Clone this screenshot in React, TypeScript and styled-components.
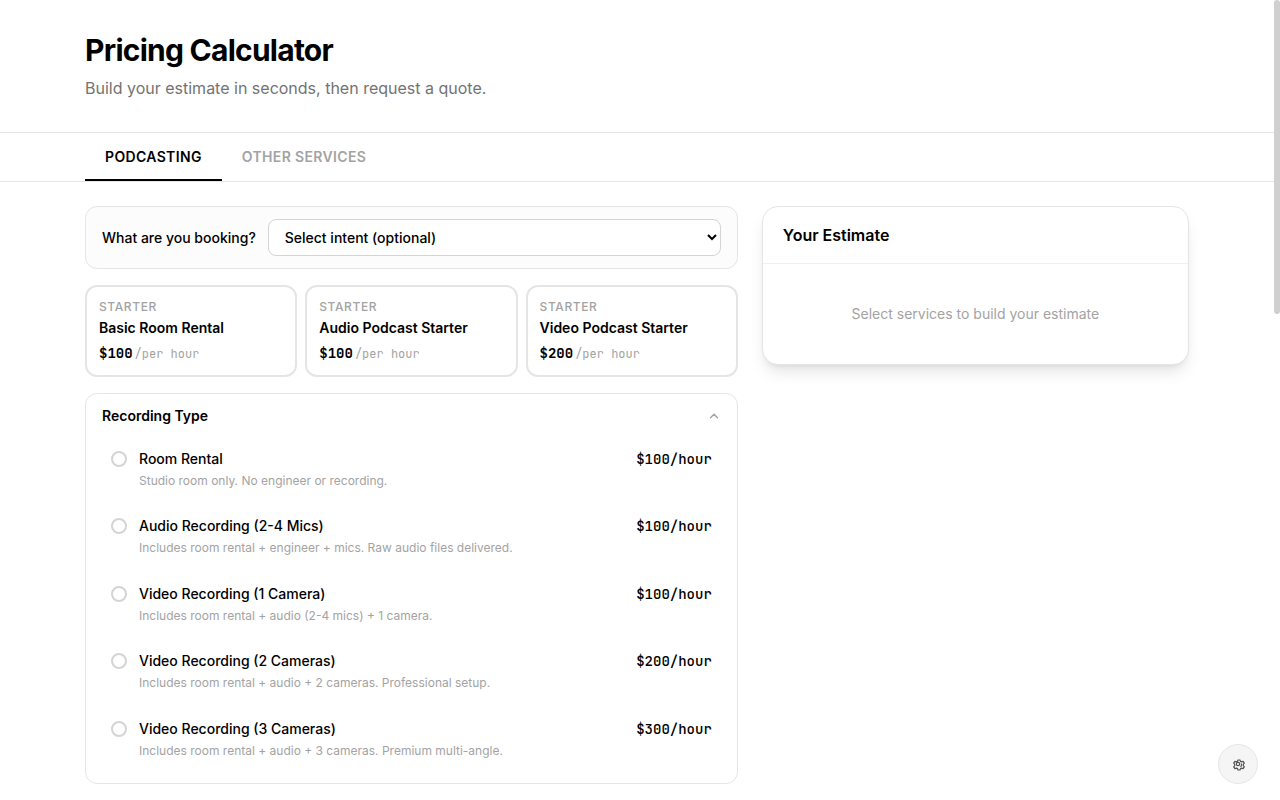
import React, { useEffect, useRef, useState } from "react";
import styled, { createGlobalStyle } from "styled-components";

const sans = `Inter, "Liberation Sans", sans-serif`;
const mono = `"JetBrains Mono", "DejaVu Sans Mono", "Liberation Mono", monospace`;

const GlobalStyle = createGlobalStyle`
  *, *::before, *::after { box-sizing: border-box; }
  body { margin: 0; background: #fff; color: #000; font-family: ${sans}; font-size: 16px; line-height: 24px; -webkit-font-smoothing: antialiased; }
  h1, h2, h3, p { margin: 0; }
  button, input, select { font-family: inherit; margin: 0; }
`;

const Shell = styled.div`
  display: flex;
  height: 100vh;
`;

const Page = styled.div`
  flex: 1;
  min-width: 0;
  overflow-y: auto;
  scrollbar-width: none;
`;

const ScrollTrack = styled.div`
  flex: none;
  width: 6px;
`;

const ScrollThumb = styled.div`
  border-radius: 3px;
  background: #d0d0d0;
`;

const Content = styled.div`
  min-height: 255vh;
`;

const Container = styled.div`
  max-width: 1152px;
  margin: 0 auto;
  padding: 0 24px;
`;

const Header = styled.header`
  padding: 32px 0;
  border-bottom: 1px solid #e5e5e5;
`;

const Title = styled.h1`
  font-size: 30px;
  line-height: 36px;
  font-weight: 700;
  letter-spacing: -0.025em;
`;

const Subtitle = styled.p`
  margin-top: 8px;
  color: #737373;
`;

const TabBar = styled.nav`
  border-bottom: 1px solid #e5e5e5;
`;

const TabList = styled.div`
  display: flex;
`;

const Tab = styled.button<{ $active: boolean }>`
  padding: 14px 20px 12px;
  border: 0;
  border-bottom: 2px solid ${(p) => (p.$active ? "#000" : "transparent")};
  background: none;
  color: ${(p) => (p.$active ? "#000" : "#a3a3a3")};
  font-size: 14px;
  line-height: 20px;
  font-weight: 600;
  letter-spacing: 0.025em;
  text-transform: uppercase;
  cursor: pointer;
`;

const Columns = styled.main`
  display: grid;
  grid-template-columns: repeat(5, minmax(0, 1fr));
  gap: 24px;
  align-items: start;
  padding: 24px 0;
`;

const Services = styled.div`
  grid-column: span 3;
  display: flex;
  flex-direction: column;
  gap: 16px;
`;

const IntentBar = styled.div`
  display: flex;
  align-items: center;
  gap: 12px;
  padding: 12px 16px;
  border: 1px solid #e5e5e5;
  border-radius: 12px;
  background: #fcfcfc;
`;

const IntentLabel = styled.label`
  font-size: 14px;
  line-height: 20px;
  font-weight: 500;
  white-space: nowrap;
`;

const IntentSelect = styled.select`
  flex: 1;
  min-width: 0;
  height: 37px;
  padding: 0 0 0 12px;
  border: 1px solid #d4d4d4;
  border-radius: 8px;
  background: #fff;
  color: #000;
  font-size: 14px;
  font-weight: 500;
`;

const Starters = styled.div`
  display: grid;
  grid-template-columns: repeat(3, minmax(0, 1fr));
  gap: 8px;
`;

const StarterCard = styled.button`
  display: flex;
  flex-direction: column;
  align-items: flex-start;
  padding: 12px;
  border: 2px solid #e5e5e5;
  border-radius: 12px;
  background: #fff;
  color: #000;
  text-align: left;
  cursor: pointer;
`;

const StarterTag = styled.span`
  color: #a3a3a3;
  font-size: 12px;
  line-height: 16px;
  font-weight: 500;
  letter-spacing: 0.05em;
  text-transform: uppercase;
`;

const StarterName = styled.span`
  font-size: 14px;
  line-height: 26px;
  font-weight: 600;
`;

const StarterPrice = styled.span`
  display: flex;
  align-items: baseline;
  gap: 2px;
  margin-top: 2px;
  font-family: ${mono};
  font-size: 14px;
  line-height: 20px;
  font-weight: 700;
`;

const StarterUnit = styled.span`
  color: #a3a3a3;
  font-size: 12px;
  line-height: 16px;
  font-weight: 400;
`;

const Section = styled.section`
  border: 1px solid #e5e5e5;
  border-radius: 12px;
  background: #fff;
`;

const SectionToggle = styled.button`
  display: flex;
  align-items: center;
  justify-content: space-between;
  width: 100%;
  padding: 12px 16px;
  border: 0;
  background: none;
  color: #000;
  font-size: 14px;
  line-height: 20px;
  font-weight: 600;
  cursor: pointer;
`;

const Chevron = styled.svg`
  width: 14px;
  height: 14px;
  color: #a3a3a3;
`;

const OptionList = styled.div`
  display: grid;
  grid-auto-rows: 1fr;
  gap: 4px;
  min-height: 345px;
  padding: 0 8px 12px;
`;

const Option = styled.label`
  display: flex;
  align-items: flex-start;
  gap: 12px;
  padding: 10px 16px;
  border: 1px solid transparent;
  border-radius: 8px;
  cursor: pointer;
`;

const Radio = styled.input`
  appearance: none;
  flex: none;
  width: 16px;
  height: 16px;
  margin-top: 2px;
  border: 2px solid #d4d4d4;
  border-radius: 50%;
  &:checked { border: 5px solid #000; }
`;

const OptionText = styled.span`
  flex: 1;
  display: flex;
  flex-direction: column;
  gap: 4px;
`;

const OptionName = styled.span`
  font-size: 14px;
  line-height: 20px;
  font-weight: 500;
`;

const OptionNote = styled.span`
  color: #a3a3a3;
  font-size: 12px;
  line-height: 16px;
`;

const OptionPrice = styled.span`
  font-family: ${mono};
  font-size: 14px;
  line-height: 20px;
  font-weight: 500;
`;

const Estimate = styled.aside`
  grid-column: span 2;
  border: 1px solid #e5e5e5;
  border-radius: 16px;
  background: #fff;
  box-shadow: 0 10px 15px -3px rgba(0, 0, 0, 0.1), 0 4px 6px -4px rgba(0, 0, 0, 0.1);
`;

const EstimateTitle = styled.h2`
  padding: 16px 20px;
  border-bottom: 1px solid #f0f0f0;
  font-size: 16px;
  line-height: 24px;
  font-weight: 600;
`;

const EstimateEmpty = styled.p`
  padding: 40px 20px;
  color: #a3a3a3;
  font-size: 14px;
  line-height: 20px;
  text-align: center;
`;

const SettingsButton = styled.button`
  position: fixed;
  right: 22px;
  bottom: 16px;
  display: flex;
  align-items: center;
  justify-content: center;
  width: 40px;
  height: 40px;
  padding: 2px 0 0 2px;
  border: 1px solid #e5e5e5;
  border-radius: 50%;
  background: #f5f5f5;
  color: #525252;
  cursor: pointer;
`;

const starters = [
  { name: "Basic Room Rental", price: "$100" },
  { name: "Audio Podcast Starter", price: "$100" },
  { name: "Video Podcast Starter", price: "$200" },
];

const recordingTypes = [
  { name: "Room Rental", note: "Studio room only. No engineer or recording.", price: "$100/hour" },
  { name: "Audio Recording (2-4 Mics)", note: "Includes room rental + engineer + mics. Raw audio files delivered.", price: "$100/hour" },
  { name: "Video Recording (1 Camera)", note: "Includes room rental + audio (2-4 mics) + 1 camera.", price: "$100/hour" },
  { name: "Video Recording (2 Cameras)", note: "Includes room rental + audio + 2 cameras. Professional setup.", price: "$200/hour" },
  { name: "Video Recording (3 Cameras)", note: "Includes room rental + audio + 3 cameras. Premium multi-angle.", price: "$300/hour" },
];

const tabs = ["Podcasting", "Other Services"];

export default function App() {
  const [tab, setTab] = useState(tabs[0]);
  const [open, setOpen] = useState(true);
  const [thumb, setThumb] = useState({ size: 39, offset: 0 });
  const page = useRef<HTMLDivElement>(null);

  const updateThumb = () => {
    const el = page.current;
    if (!el) return;
    setThumb({
      size: (el.clientHeight / el.scrollHeight) * 100,
      offset: (el.scrollTop / el.scrollHeight) * el.clientHeight,
    });
  };

  useEffect(() => {
    updateThumb();
    window.addEventListener("resize", updateThumb);
    return () => window.removeEventListener("resize", updateThumb);
  }, []);

  return (
    <>
      <GlobalStyle />
      <Shell>
        <Page ref={page} onScroll={updateThumb}>
          <Content>
            <Header>
              <Container>
                <Title>Pricing Calculator</Title>
                <Subtitle>Build your estimate in seconds, then request a quote.</Subtitle>
              </Container>
            </Header>
            <TabBar>
              <Container>
                <TabList>
                  {tabs.map((name) => (
                    <Tab key={name} type="button" $active={name === tab} onClick={() => setTab(name)}>
                      {name}
                    </Tab>
                  ))}
                </TabList>
              </Container>
            </TabBar>
            <Container>
              <Columns>
                <Services>
                  <IntentBar>
                    <IntentLabel htmlFor="intent">What are you booking?</IntentLabel>
                    <IntentSelect id="intent">
                      <option>Select intent (optional)</option>
                    </IntentSelect>
                  </IntentBar>
                  <Starters>
                    {starters.map((s) => (
                      <StarterCard key={s.name} type="button">
                        <StarterTag>Starter</StarterTag>
                        <StarterName>{s.name}</StarterName>
                        <StarterPrice>
                          {s.price}
                          <StarterUnit>/per hour</StarterUnit>
                        </StarterPrice>
                      </StarterCard>
                    ))}
                  </Starters>
                  <Section>
                    <SectionToggle type="button" aria-expanded={open} onClick={() => setOpen(!open)}>
                      Recording Type
                      <Chevron
                        viewBox="0 0 24 24"
                        fill="none"
                        stroke="currentColor"
                        strokeWidth="2.5"
                        strokeLinecap="round"
                        strokeLinejoin="round"
                        aria-hidden="true"
                      >
                        <path d={open ? "M18 15l-6-6-6 6" : "M6 9l6 6 6-6"} />
                      </Chevron>
                    </SectionToggle>
                    {open && (
                      <OptionList>
                        {recordingTypes.map((r) => (
                          <Option key={r.name}>
                            <Radio type="radio" name="recording-type" />
                            <OptionText>
                              <OptionName>{r.name}</OptionName>
                              <OptionNote>{r.note}</OptionNote>
                            </OptionText>
                            <OptionPrice>{r.price}</OptionPrice>
                          </Option>
                        ))}
                      </OptionList>
                    )}
                  </Section>
                </Services>
                <Estimate>
                  <EstimateTitle>Your Estimate</EstimateTitle>
                  <EstimateEmpty>Select services to build your estimate</EstimateEmpty>
                </Estimate>
              </Columns>
            </Container>
          </Content>
        </Page>
        <ScrollTrack aria-hidden="true">
          <ScrollThumb style={{ height: `${thumb.size}%`, transform: `translateY(${thumb.offset}px)` }} />
        </ScrollTrack>
      </Shell>
      <SettingsButton type="button" aria-label="Settings">
        <svg width="14" height="14" viewBox="0 0 14 14" fill="none" stroke="currentColor" strokeWidth="1.2" strokeLinejoin="round" aria-hidden="true">
          <path d="M6 2h2l.5 1.4 1 .5 1.6-.5 1.2 1.8-1 1.2v1.2l1 1.2-1.2 1.8-1.6-.5-1 .5L8 12H6l-.5-1.4-1-.5-1.6.5-1.2-1.8 1-1.2V6.400l-1-1.2 1.200-1.800 1.600.5 1-.5z" />
          <circle cx="6" cy="6" r="1.700" />
          <path d="M9.200 5.500c.8 1.200.4 2.600-.8 3.300" />
        </svg>
      </SettingsButton>
    </>
  );
}
